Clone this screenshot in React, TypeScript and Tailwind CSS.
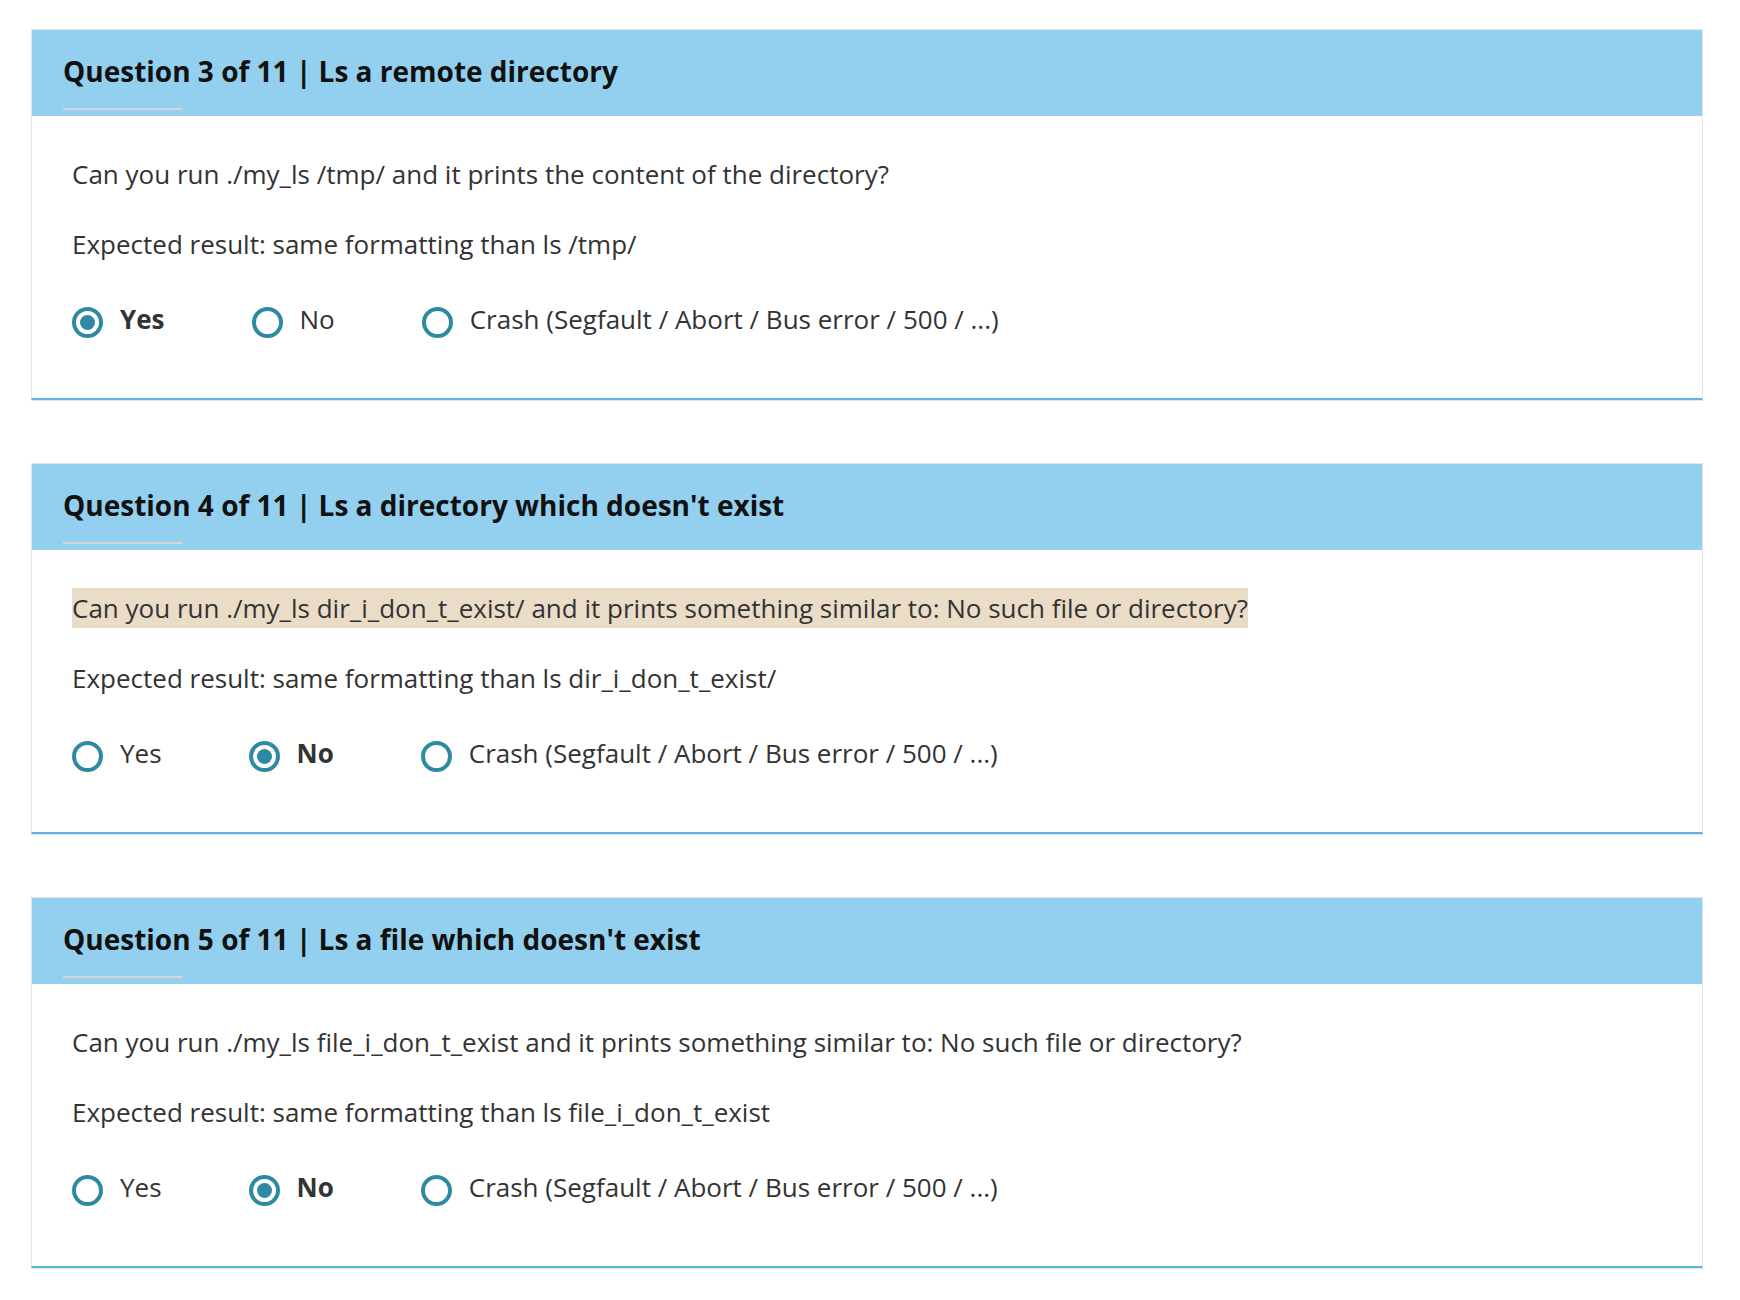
import { useState } from 'react'

type Answer = 'yes' | 'no' | 'crash'

type Question = {
  id: number
  title: string
  text: string
  expected: string
  highlight?: boolean
  answer: Answer
}

const questions: Question[] = [
  {
    id: 3,
    title: 'Ls a remote directory',
    text: 'Can you run ./my_ls /tmp/ and it prints the content of the directory?',
    expected: 'Expected result: same formatting than ls /tmp/',
    answer: 'yes',
  },
  {
    id: 4,
    title: "Ls a directory which doesn't exist",
    text: 'Can you run ./my_ls dir_i_don_t_exist/ and it prints something similar to: No such file or directory?',
    expected: 'Expected result: same formatting than ls dir_i_don_t_exist/',
    highlight: true,
    answer: 'no',
  },
  {
    id: 5,
    title: "Ls a file which doesn't exist",
    text: 'Can you run ./my_ls file_i_don_t_exist and it prints something similar to: No such file or directory?',
    expected: 'Expected result: same formatting than ls file_i_don_t_exist',
    answer: 'no',
  },
]

const options: { value: Answer; label: string }[] = [
  { value: 'yes', label: 'Yes' },
  { value: 'no', label: 'No' },
  { value: 'crash', label: 'Crash (Segfault / Abort / Bus error / 500 / ...)' },
]

function Radio({ checked }: { checked: boolean }) {
  return (
    <span className="mt-[4px] flex h-[31px] w-[31px] shrink-0 items-center justify-center rounded-full border-[4px] border-[#2e8aa3] bg-white">
      {checked && <span className="h-[15px] w-[15px] rounded-full bg-[#2e8aa3]" />}
    </span>
  )
}

function QuestionCard({ question }: { question: Question }) {
  const [answer, setAnswer] = useState<Answer>(question.answer)

  return (
    <section className="w-[1672px] border-x border-t border-[#e4e4e4] border-b-2 border-b-[#5ab7e3] bg-white shadow-[0_1px_0_#e4e4e4]">
      <div className="bg-[#93cfee] pl-[31px] pt-[22px] pb-[6px]">
        <h2 className="text-[28px] font-bold leading-[38px] text-[#111]">
          Question {question.id} of 11 | {question.title}
        </h2>
        <div className="mt-[18px] h-[2px] w-[119px] bg-[#d3d6d8]" />
      </div>

      <div className="px-[40px] pt-[42px] pb-[60px] text-[26px] leading-[32px] text-[#333]">
        <p>
          {question.highlight ? (
            <span className="bg-[#ebdcc8] py-[2px]">{question.text}</span>
          ) : (
            question.text
          )}
        </p>
        <p className="mt-[38px]">{question.expected}</p>

        <div className="mt-[43px] flex">
          {options.map((option) => (
            <label
              key={option.value}
              onClick={() => setAnswer(option.value)}
              className="mr-[87px] flex cursor-pointer items-start gap-[17px]"
            >
              <Radio checked={answer === option.value} />
              <span className={answer === option.value ? 'font-bold' : ''}>{option.label}</span>
            </label>
          ))}
        </div>
      </div>
    </section>
  )
}

export default function App() {
  return (
    <main
      className="min-h-screen bg-white pt-[29px] pl-[31px]"
      style={{ fontFamily: '"Open Sans", "Noto Sans", sans-serif' }}
    >
      <div className="flex flex-col gap-[63px]">
        {questions.map((question) => (
          <QuestionCard key={question.id} question={question} />
        ))}
      </div>
    </main>
  )
}
